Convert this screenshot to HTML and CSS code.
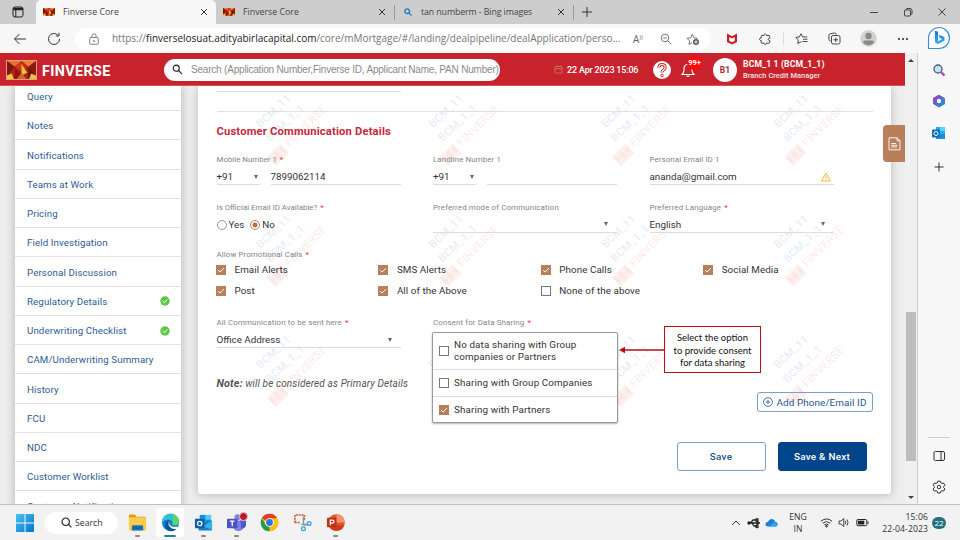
FILE: index.html
```
<!DOCTYPE html>
<html lang="en">
<head>
<meta charset="utf-8">
<title>Finverse Core</title>
<link rel="stylesheet" href="styles.css">
</head>
<body>
<svg class="defs" aria-hidden="true">
  <defs>
    <symbol id="logo" viewBox="0 0 30 20" preserveAspectRatio="none">
      <rect width="30" height="20" fill="#a8201a"/>
      <path d="M0 0h15L8 6z" fill="#e8742a"/><path d="M15 0h15l-8 6z" fill="#f0822b"/>
      <path d="M0 0l8 7-8 10z" fill="#7d1512"/><path d="M30 0l-8 7 8 10z" fill="#8b1a14"/>
      <path d="M8 6l7-6v12z" fill="#d8371f"/><path d="M22 6l-7-6v12z" fill="#c22a1d"/><path d="M15 3l6 10-6 3z" fill="#e6c334"/>
      <path d="M8 7L0 17l5-1 3 4z" fill="#b8231b"/><path d="M22 7l8 10-5-1-3 4z" fill="#6f1210"/>
      <path d="M8 7l7 9-4 4H8z" fill="#8c1714"/>
      <path d="M0 20v-4l5-2 2 6z" fill="#f0c63a"/><path d="M30 20v-4l-5-2-2 6z" fill="#eec13a"/>
      <path d="M10 20l5-7 5 7z" fill="#d9622a"/>
    </symbol>
    <symbol id="close" viewBox="0 0 8 8"><path d="M1 1l6 6M7 1l-6 6" stroke="#333" stroke-width="1"/></symbol>
    <symbol id="check" viewBox="0 0 10 10"><path d="M2.2 5.2l1.900 1.900 3.800-4" fill="none" stroke="#fff" stroke-width="1"/></symbol>
    <symbol id="mark" viewBox="0 0 80 90">
      <g font-family="Roboto, sans-serif" font-size="11">
        <text transform="translate(15 42) rotate(-43)" textLength="42" fill="#e5ecf6">BCM_11</text>
        <text transform="translate(24.500 56) rotate(-43)" textLength="48" fill="#e5ecf6">BCM_1_1</text>
        <text transform="translate(44 61) rotate(-45)" textLength="53" fill="#fcebea">FINVERSE</text>
      </g>
      <g transform="translate(32.500 69) rotate(-45)"><rect x="-9" y="-6.500" width="18" height="13" fill="#fdf1ee"/><path d="M-9-6.500l5 6-5 7zM9-6.500l-5 6 5 7zM-4 0l4-6 3 6-3 6z" fill="#fbe8e6"/></g>
    </symbol>
    <symbol id="ok" viewBox="0 0 10 10"><circle cx="5" cy="5" r="4.700" fill="#5fc648"/><path d="M2.700 5.100l1.600 1.600 3-3.200" fill="none" stroke="#fff"/></symbol>
  </defs>
</svg>

<div class="tabs">
  <div class="tab-actions"><svg width="12" height="12" viewBox="0 0 12 12" fill="none" stroke="#222"><rect x="1" y="1" width="10" height="10" rx="2"/><path d="M1 2.500h10M1.500 3.500h9" stroke-width="1.300"/><path d="M3.800 4v7" /></svg></div>
  <div class="tab active"><svg class="fav"><use href="#logo"/></svg><span>Finverse Core</span><svg class="x"><use href="#close"/></svg></div>
  <div class="tab second"><svg class="fav"><use href="#logo"/></svg><span>Finverse Core</span><svg class="x"><use href="#close"/></svg></div>
  <div class="tab third"><svg class="lens" viewBox="0 0 8 8" fill="none" stroke="#1c78c8" stroke-width="1.300"><circle cx="3.200" cy="3.200" r="2.300"/><path d="M5 5l2.500 2.500"/></svg><span class="bing">tan numberm - Bing images</span><svg class="x"><use href="#close"/></svg></div>
  <svg class="plus" viewBox="0 0 12 12" stroke="#333"><path d="M6 1v10M1 6h10"/></svg>
  <div class="window">
    <svg viewBox="0 0 10 10" fill="none" stroke="#333"><path d="M1 5.500h8" stroke-width=".9"/></svg>
    <svg viewBox="0 0 10 10" fill="none" stroke="#333" stroke-width=".9"><rect x="1.500" y="3" width="6" height="6" rx="1"/><path d="M3 2.500q.2-1 1-1h3q2 0 2 2v3q0 .8-1 1"/></svg>
    <svg viewBox="0 0 10 10" stroke="#333" stroke-width=".9"><path d="M1.500 1.500l7 7M8.500 1.500l-7 7"/></svg>
  </div>
</div>

<div class="toolbar">
  <svg class="nav back" viewBox="0 0 14 14" fill="none" stroke="#333"><path d="M13 7H1.500M6.500 2l-5 5 5 5"/></svg>
  <svg class="nav reload" viewBox="0 0 14 14" fill="none" stroke="#333"><path d="M12.500 7A5.500 5.500 0 1 1 10.800 3M12 .8V4H8.800"/></svg>
  <div class="address">
    <svg class="lock" viewBox="0 0 10 12" fill="none" stroke="#666" stroke-width=".8"><rect x=".7" y="4.500" width="8.600" height="6.800" rx="1.200"/><path d="M3 4.500V2.700a2 2 0 0 1 4 0v1.800"/><circle cx="5" cy="8" r=".5" fill="#666"/></svg>
    <span class="url">https://<b>finverselosuat.adityabirlacapital.com</b>/core/mMortgage/#/landing/dealpipeline/dealApplication/perso...</span>
    <span class="aloud">A<sup>))</sup></span>
    <svg class="zoom" viewBox="0 0 12 12" fill="none" stroke="#666" stroke-width=".9"><circle cx="5" cy="5" r="3.800"/><path d="M7.800 7.800l3.500 3.500M3.200 5h3.600"/></svg>
    <svg class="star" viewBox="0 0 14 14" fill="none" stroke="#666" stroke-width=".9"><path d="M6 10.800l-3 1.700.6-3.600L1 6.300l3.600-.5L6.300 2.300 8 5.800l3.600.5"/><circle cx="10" cy="10" r="3" fill="#555" stroke="none"/><path d="M10 8.300v3.400M8.300 10h3.400" stroke="#fff"/></svg>
  </div>
  <svg class="tool t1" viewBox="0 0 12 12"><path d="M1 .5l5 2.700L11 .5V9L6 11.500 1 9zM3.200 4v3.700L6 9.200l2.800-1.500V4L6 5.500z" fill="#c4202b" fill-rule="evenodd"/></svg>
  <svg class="tool t2" viewBox="0 0 12 12" fill="none" stroke="#333" stroke-width=".9"><path d="M3 2.500h2c-.3-2 2.700-2 2.400 0H10q.7 0 .7.700v2c-2-.4-2 2.500 0 2.200v2q0 .8-.8.800H7.500c.2 1.500-2.700 1.500-2.500 0H3q-.8 0-.8-.8V7.500C0 7.700 0 4.700 2.200 5V3.300q0-.8.800-.8z"/></svg>
  <i class="tsep"></i>
  <svg class="tool t3" viewBox="0 0 13 12" fill="none" stroke="#333" stroke-width=".9"><path d="M6.500 9L6 8.700 2.800 10.500l.5-3.600L.8 4.500l3.500-.6L6 .8l1.600 3.100h4.600M8 6.200h4.500M7.500 8.500h5"/></svg>
  <svg class="tool t4" viewBox="0 0 13 13" fill="none" stroke="#333" stroke-width=".9"><path d="M2.500 9Q1 8.800 1 7.500L.8 3.500Q.8 2 2.300 1.700L6.500 1Q8 .9 8.400 2.500"/><rect x="3.500" y="3.500" width="8.500" height="8.500" rx="1.600"/><path d="M7.800 5.500v4.500M5.500 7.800H10"/></svg>
  <svg class="avatar" viewBox="0 0 17 17"><circle cx="8.500" cy="8.500" r="8.300" fill="#d4d2cf"/><circle cx="8.500" cy="6" r="3.200" fill="#8b8986"/><path d="M3 12.200q0-1.800 2-1.800h7q2 0 2 1.800-2 3-5.500 3t-5.500-3z" fill="#8b8986"/></svg>
  <svg class="dots" viewBox="0 0 12 4" fill="#222"><circle cx="2" cy="2" r="1"/><circle cx="6" cy="2" r="1"/><circle cx="10" cy="2" r="1"/></svg>
</div>

<div class="middle">
  <div class="app">
    <header class="appbar">
      <svg class="brand"><use href="#logo"/></svg>
      <strong class="brandname">FINVERSE</strong>
      <div class="search"><svg viewBox="0 0 12 12" fill="none" stroke="#222" stroke-width="1.300"><circle cx="4.600" cy="4.600" r="3.300"/><path d="M7 7l4 4"/></svg><span>Search (Application Number,Finverse ID, Applicant Name, PAN Number)</span></div>
      <svg class="cal" viewBox="0 0 9 9" fill="none" stroke="#c87a52" stroke-width=".9"><rect x="1" y="1.500" width="7" height="6.500" rx=".6"/><path d="M1 3.700h7M3 .5v1.500M6 .5v1.500"/></svg>
      <span class="date">22 Apr 2023 15:06</span>
      <span class="help"><svg viewBox="0 0 18 18"><circle cx="9" cy="9" r="9" fill="#fff"/><path d="M5.800 6.700Q5.800 3.500 9 3.500t3.200 3Q12.200 8 10.500 9 9 9.800 9 11.500" fill="none" stroke="#c8232c" stroke-width="3"/><path d="M5.800 6.700Q5.800 3.500 9 3.500t3.200 3Q12.200 8 10.500 9 9 9.800 9 11.500" fill="none" stroke="#fff" stroke-width="1.200"/><circle cx="9" cy="14.500" r="1.300" fill="none" stroke="#c8232c" stroke-width=".9"/></svg></span>
      <span class="bell"><svg viewBox="0 0 14 17" fill="none" stroke="#fff" stroke-width="1.100"><path d="M1 13.500q2-2 2-4V7q.3-3.500 4-3.800Q10.700 3.500 11 7v2.500q0 2 2 4zM5.500 14.500q1.500 2 3 0M7 3V1.500"/></svg><em>99+</em></span>
      <span class="initials">B1</span>
      <div class="user"><b>BCM_1 1 (BCM_1_1)</b><small>Branch Credit Manager</small></div>
    </header>
    <div class="page">
      <nav class="menu">
        <a>Query</a><a>Notes</a><a>Notifications</a><a>Teams at Work</a><a>Pricing</a><a>Field Investigation</a><a>Personal Discussion</a>
        <a>Regulatory Details<svg><use href="#ok"/></svg></a><a>Underwriting Checklist<svg><use href="#ok"/></svg></a>
        <a>CAM/Underwriting Summary</a><a>History</a><a>FCU</a><a>NDC</a><a>Customer Worklist</a><a>Customer Notification</a>
      </nav>
      <main class="card">
        <svg class="marks" viewBox="0 0 692 408" width="692" height="408">
          <g id="markrow"><use href="#mark" x="47.500" y="0" width="80" height="90"/><use href="#mark" x="220" y="0" width="80" height="90"/><use href="#mark" x="392.500" y="0" width="80" height="90"/><use href="#mark" x="565" y="0" width="80" height="90"/></g>
          <use href="#markrow" y="120.500"/><use href="#markrow" y="241"/>
        </svg>
        <div class="prev"></div>
        <div class="rule"></div>
        <h2>Customer Communication Details</h2>
        <div class="fields">
          <div class="field"><label class="tight">Mobile Number 1 <i>*</i></label><div class="phone"><div class="value">+91<s></s></div><div class="value">7899062114</div></div></div>
          <div class="field"><label>Landline Number 1</label><div class="phone"><div class="value">+91<s></s></div><div class="value"></div></div></div>
          <div class="field"><label>Personal Email ID 1</label><div class="value mail">ananda@gmail.com<svg viewBox="0 0 10 10" fill="none" stroke="#f5b93a"><path d="M5 1L9.400 9H.6zM5 3.700v3M5 7.300v.8"/></svg></div></div>
        </div>
        <div class="fields second-row">
          <div class="field"><label class="tight">Is Official Email ID Available? <i>*</i></label><div class="radios"><span class="radio"></span>Yes<span class="radio on"></span>No</div></div>
          <div class="field"><label class="wide">Preferred mode of Communication</label><div class="value"><s></s></div></div>
          <div class="field"><label class="wide">Preferred Language <i>*</i></label><div class="value">English<s></s></div></div>
        </div>
        <label class="promo">Allow Promotional Calls <i>*</i></label>
        <div class="checks">
          <span><svg class="box on"><use href="#check"/></svg>Email Alerts</span><span><svg class="box on"><use href="#check"/></svg>SMS Alerts</span><span><svg class="box on"><use href="#check"/></svg>Phone Calls</span><span><svg class="box on"><use href="#check"/></svg>Social Media</span>
          <span><svg class="box on"><use href="#check"/></svg>Post</span><span><svg class="box on"><use href="#check"/></svg>All of the Above</span><span><svg class="box"></svg>None of the above</span>
        </div>
        <div class="fields consent-row">
          <div class="field"><label class="wide">All Communication to be sent here <i>*</i></label><div class="value">Office Address<s></s></div><p class="note"><b>Note:</b> will be considered as Primary Details</p></div>
          <div class="field"><label class="wide">Consent for Data Sharing <i>*</i></label>
            <div class="panel">
              <div class="opt tall"><svg class="box"></svg><span>No data sharing with Group<br>companies or Partners</span></div>
              <div class="opt"><svg class="box"></svg><span>Sharing with Group Companies</span></div>
              <div class="opt"><svg class="box on"><use href="#check"/></svg><span>Sharing with Partners</span></div>
            </div>
          </div>
          <div class="add-wrap"><button class="add"><svg viewBox="0 0 10 10" fill="none" stroke="#1d5496" stroke-width=".8"><circle cx="5" cy="5" r="4.400"/><path d="M5 2.800v4.400M2.800 5h4.400"/></svg>Add Phone/Email ID</button></div>
        </div>
        <div class="actions"><button class="save">Save</button><button class="save next">Save &amp; Next</button></div>
        <svg class="arrow" viewBox="0 0 48 8"><path d="M5 4h43" stroke="#b90d12" stroke-width="1.400"/><path d="M0 4l6-3.200v6.400z" fill="#b90d12"/></svg>
        <div class="callout">Select the option<br>to provide consent<br>for data sharing</div>
      </main>
      <div class="docs"><svg viewBox="0 0 13 14" fill="none" stroke="#fff" stroke-width=".9"><path d="M1 .8h8l3 3v9H1zM9 .8v3h3M3.200 6.500h5M3.200 8.300h6M3.200 10h6"/></svg></div>
    </div>
  </div>
  <div class="scroll"><b class="up"></b><span class="thumb"></span><b class="down"></b></div>
  <aside class="rail">
    <svg class="bingchat" viewBox="0 0 24 24"><defs><linearGradient id="bg" x1="0" y1="0" x2="0" y2="1"><stop offset="0" stop-color="#1b6fd8"/><stop offset="1" stop-color="#36b6f0"/></linearGradient></defs><path d="M1.500 22.500V11.500A10.500 10.500 0 1 1 12 22.500z" fill="#fff" stroke="#2f8be6" stroke-width="1.100"/><path d="M8 4.800l3 1v9.500l4-2.200-2.200-1.100-1.300-3.200 6 2.100v3.600l-6.600 3.800L8 16.300z" fill="url(#bg)"/></svg>
    <svg class="r r1" viewBox="0 0 14 14" fill="none"><circle cx="6" cy="6" r="4" fill="#bfe4f5" stroke="#555c66" stroke-width="1.300"/><path d="M9 9l3.500 3.500" stroke="#a33be0" stroke-width="2.200"/></svg>
    <svg class="r r2" viewBox="0 0 14 14"><path d="M7 .7L12.800 4v6L7 13.300 1.200 10V4z" fill="#5a63c8"/><path d="M7 .7L1.200 4v6L4 8V5.500l4-2.300z" fill="#8a4dc4"/><path d="M12.800 5v5L7 13.300 3 11l3-1 4-2V4z" fill="#2c87cf"/><circle cx="7" cy="7" r="2.200" fill="#f7f7f7"/></svg>
    <svg class="r r3" viewBox="0 0 14 14"><path d="M4 1h9v11H4z" fill="#28a8ea"/><path d="M8 1h5v4H8z" fill="#50d9ff"/><path d="M4 8h9v5H4z" fill="#1490df"/><rect y="3.500" width="8" height="8" rx="1" fill="#0f6cbd"/><circle cx="4" cy="7.500" r="2" fill="none" stroke="#fff"/></svg>
    <svg class="r r4" viewBox="0 0 12 12" stroke="#333"><path d="M6 1.500v9M1.500 6h9"/></svg>
    <i class="rline"></i>
    <svg class="r r5" viewBox="0 0 12 12" fill="none" stroke="#333"><rect x="1" y="1.500" width="10.500" height="9" rx="1.500"/><path d="M8 1.500v9"/></svg>
    <svg class="r r6" viewBox="0 0 14 14" fill="none" stroke="#333" stroke-width="1"><path d="M5.700 1.200h2.600l.5 1.700 1.100.6 1.700-.4 1.300 2.200L11.700 6.500v1.200l1.200 1.200-1.300 2.200-1.700-.4-1.100.6-.5 1.700H5.700l-.5-1.700-1.100-.6-1.700.4L1.100 8.900l1.200-1.200V6.500L1.100 5.300l1.300-2.200 1.700.4 1.100-.6z"/><circle cx="7" cy="7.100" r="1.700"/></svg>
  </aside>
</div>

<footer class="taskbar">
  <svg class="start" viewBox="0 0 18 18"><defs><linearGradient id="wg" x1="0" y1="0" x2="1" y2="1"><stop offset="0" stop-color="#46c4f5"/><stop offset="1" stop-color="#0674cf"/></linearGradient></defs><path d="M0 0h8.500v8.500H0zM9.500 0H18v8.500H9.500zM0 9.500h8.500V18H0zM9.500 9.500H18V18H9.500z" fill="url(#wg)"/></svg>
  <div class="tsearch"><svg viewBox="0 0 11 11" fill="none" stroke="#222" stroke-width="1.200"><circle cx="4.700" cy="4.700" r="3.700"/><path d="M7.400 7.400l3 3"/></svg>Search</div>
  <div class="apps">
    <span class="run"><svg viewBox="0 0 20 20"><path d="M1 3q0-1.500 1.500-1.500H7L9 4h9.500v4H1z" fill="#dc9a12"/><rect x="1" y="4.500" width="18" height="14" rx="1.200" fill="#fdcb48"/><path d="M4 18.500V14.500Q4 13 5.500 13h9q1.500 0 1.500 1.500v4z" fill="#1474c4"/><path d="M7 15.800h6" stroke="#0a4c88"/></svg></span>
    <span class="sel"><svg viewBox="0 0 20 20"><circle cx="10" cy="10" r="9" fill="#1180cf"/><path d="M1 10A9 9 0 0 1 19 9q.2 4-4 4-3.500 0-3-2 1-3-3-4Q4 6 1 10z" fill="#2fc1d8"/><path d="M11 1.100Q18.500 2 19 9q.2 4-4 4-3.500 0-3-2 .6-1.500 0-2.500 3-3-1-7.400z" fill="#5bd566"/><path d="M9 7q-4 5 1 9 3 2 7 .2Q13 20 8 18.800 3 16 4.500 11 6 7.500 9 7z" fill="#0c4f9a"/><path d="M9.300 8q-2 2 0 4.500 2.500 3 7 1.800L18 15.500l-1 1q-4 1-6.500-1Q6 12 9.300 8z" fill="#fafafa"/></svg></span>
    <span class="run"><svg viewBox="0 0 20 20"><path d="M6 2h12v8H6z" fill="#1490df"/><path d="M12 2h6v5h-6z" fill="#50d0fa"/><path d="M4 11l15-3v9.500q0 1-1 1H5z" fill="#1580cc"/><path d="M19 8l-9 6 9 4z" fill="#35b4ee"/><rect x="1" y="6" width="10" height="10" rx="1" fill="#0f5ead"/><circle cx="6" cy="11" r="2.300" fill="none" stroke="#fff" stroke-width="1.300"/></svg></span>
    <span class="run"><svg viewBox="0 0 20 20"><circle cx="11" cy="4.500" r="3.200" fill="#7b83eb"/><path d="M6 8h12v6q-1 5-6 5t-6-5z" fill="#7b83eb"/><path d="M14 8h6v5q-1 4-5 3z" fill="#5059c9"/><rect x="0" y="6" width="11" height="10" rx="1" fill="#4b53bc"/><path d="M3 8.500h5M5.500 8.500v5.500" stroke="#fff" stroke-width="1.300"/></svg><u></u></span>
    <span><svg viewBox="0 0 20 20"><circle cx="10" cy="10" r="9.200" fill="#fbc116"/><path d="M10 10L2 5.400A9.200 9.200 0 0 1 18 5.400z" fill="#e33b2e"/><path d="M10 5.400h8A9.200 9.200 0 0 1 10 19.200L14 12z" fill="#fbc116"/><path d="M2 5.400L6 12.300 10 14.500 10 19.200A9.200 9.200 0 0 1 2 5.400z" fill="#269b48"/><circle cx="10" cy="10" r="4.600" fill="#fff"/><circle cx="10" cy="10" r="3.600" fill="#2c74e6"/></svg></span>
    <span><svg viewBox="0 0 20 20" fill="none"><path d="M2 10V2h10v6M2 10h6" stroke="#d5492c" stroke-width="1.600" stroke-dasharray="2 1"/><path d="M11 4v8l3 1M9 12h7" stroke="#8c9298" stroke-width="1.600"/><circle cx="11" cy="16.500" r="2" stroke="#2d9fe0" stroke-width="1.300"/><circle cx="17" cy="11" r="2" stroke="#2d9fe0" stroke-width="1.300"/></svg></span>
    <span class="run"><svg viewBox="0 0 20 20"><circle cx="11" cy="10" r="8.800" fill="#e2532f"/><path d="M11 1.200A8.800 8.800 0 0 1 19.800 10H11z" fill="#ff9068"/><path d="M3 13h16.200Q17 18.800 11 18.800T3 13z" fill="#cf3d18"/><rect x="1" y="5" width="10" height="10" rx="1" fill="#b83415"/><path d="M4.500 13V7.500h2q2 0 2 1.600t-2 1.600h-2" stroke="#fff" stroke-width="1.200" fill="none"/></svg></span>
  </div>
  <div class="tray">
    <svg class="chev" viewBox="0 0 10 10" fill="none" stroke="#333"><path d="M1 7l4-4 4 4"/></svg>
    <svg class="usb" viewBox="0 0 13 12" fill="none" stroke="#222" stroke-width="1.300"><path d="M1 6h10M3.500 6l2.500-3h3M5 6l2 3h3"/><circle cx="2" cy="6" r="1" fill="#222"/><rect x="9" y="2" width="2" height="2"/><circle cx="10" cy="9.500" r="1.200"/><path d="M10 4.500L12.500 6 10 7.500z" fill="#222"/></svg>
    <svg class="cloud" viewBox="0 0 13 9"><path d="M3 8.500Q.3 8.300.5 6 .8 4 3 3.800 4.200.7 7 1q2.300.3 3 2.700 2.600.2 2.700 2.500 0 2.300-2.500 2.300z" fill="#1a7fd6"/><path d="M3.500 8.500L9 4l3.700 2.500q-.2 2-2.500 2z" fill="#28a8f0"/></svg>
    <span class="lang">ENG<br>IN</span>
    <svg class="wifi" viewBox="0 0 13 11" fill="none" stroke="#333" stroke-width="1"><path d="M1 4.200q5.500-4.500 11 0M2.700 6.100q3.800-3 7.600 0M4.400 7.900q2.100-1.600 4.200 0"/><circle cx="6.500" cy="9.200" r=".8" fill="#333"/></svg>
    <svg class="vol" viewBox="0 0 12 11" fill="none" stroke="#333" stroke-width=".9"><path d="M1 4h2l2.800-2.500v8L3 7H1zM7.300 3.800q1 1.700 0 3.400M9 2.500q2 3 0 6"/></svg>
    <svg class="bat" viewBox="0 0 13 9"><rect x=".8" y="1.500" width="10" height="6.200" rx="1.300" fill="none" stroke="#222"/><rect x="2" y="2.700" width="6.300" height="3.800" fill="#222"/><path d="M12 3.500v2.200" stroke="#222"/></svg>
    <span class="clock">15:06<br>22-04-2023</span>
    <span class="count">22</span>
  </div>
</footer>
</body>
</html>
```
FILE: styles.css
```
* { box-sizing: border-box; }
body { margin: 0; width: 960px; height: 540px; overflow: hidden; display: flex; flex-direction: column; font-family: Roboto, sans-serif; background: #f7f7f7; color: #333; }
svg { flex: none; display: block; }
.defs { width: 0; height: 0; position: absolute; }
i, em { font-style: normal; }

.tabs { flex: none; height: 24px; background: #cdcdcd; display: flex; align-items: center; font: 8.8px "Open Sans", sans-serif; color: #444; }
.tab-actions { width: 36px; padding-left: 12px; }
.tab { height: 24px; display: flex; align-items: center; padding-left: 7px; }
.tab span { margin-top: -1px; }
.tab.active { width: 180px; background: #f7f7f7; border-radius: 5px 5px 0 0; }
.tab.second { width: 179px; border-right: 1px solid #999; height: 15px; }
.tab.third { width: 179px; height: 15px; border-right: 1px solid #999; padding-left: 9px; }
.fav { width: 12px; height: 8px; margin-right: 8px; }
.lens { width: 8px; height: 8px; margin-right: 9px; }
.x { width: 8px; height: 8px; margin-left: auto; margin-right: 8px; }
.plus { width: 12px; height: 12px; margin-left: 7px; }
.window { margin-left: auto; display: flex; gap: 24px; padding-right: 13px; }
.window svg { width: 10px; height: 10px; }
.bing { letter-spacing: -.1px; }

.toolbar { flex: none; height: 29px; background: #f7f7f7; display: flex; align-items: center; }
.nav { width: 14px; height: 14px; }
.back { margin-left: 13px; }
.reload { margin-left: 20px; }
.address { margin-left: 14px; width: 636px; height: 22px; border-radius: 11px; background: #fff; display: flex; align-items: center; }
.lock { width: 10px; height: 12px; margin-left: 14px; }
.url { margin-left: 13px; width: 509px; white-space: nowrap; font: 10px "Open Sans", sans-serif; color: #757575; letter-spacing: -.01px; margin-top: -1px; }
.url b { font-weight: 400; color: #222; }
.aloud { margin-left: 12px; width: 14px; font: 10px "Open Sans", sans-serif; color: #666; white-space: nowrap; }
.aloud sup { font-size: 6px; }
.zoom { width: 12px; height: 12px; margin-left: 13px; }
.star { width: 14px; height: 14px; margin-left: 14px; }
.tool { width: 12px; height: 12px; }
.t1 { margin-left: 15px; }
.t2 { margin-left: 21px; }
.tsep { width: 1px; height: 13px; background: #ddd; margin: 0 11px 0 12px; }
.t3 { width: 13px; }
.t4 { width: 13px; height: 13px; margin-left: 20px; }
.avatar { width: 17px; height: 17px; margin-left: 19px; }
.dots { width: 12px; height: 4px; margin-left: 20px; }

.middle { flex: none; height: 451px; display: flex; }
.app { width: 905px; display: flex; flex-direction: column; background: #ededed; }
.appbar { flex: none; height: 33px; background: #c8232c; display: flex; align-items: center; color: #fff; border-bottom: 1px solid #d9545a; padding-top: 1px; }
.brand { width: 31px; height: 20px; margin-left: 6px; border: 1px solid #e29a8e; }
.brandname { margin-left: 5px; width: 69px; font-size: 14.3px; font-weight: 700; letter-spacing: .4px; margin-top: 3px; }
.search { margin-left: 53px; width: 336px; height: 22px; border-radius: 11px; background: #fff; display: flex; align-items: center; padding-left: 8px; }
.search svg { width: 11px; height: 11px; margin-right: 8px; }
.search span { font: 10px "Liberation Sans", sans-serif; color: #8a8a8a; white-space: nowrap; letter-spacing: -.2px; }
.cal { width: 9px; height: 9px; margin-left: 54px; }
.date { margin-left: 4px; width: 72px; font-size: 9px; font-weight: 500; white-space: nowrap; letter-spacing: -.18px; margin-top: 1px; }
.help { margin-left: 14px; }
.help svg { width: 18px; height: 18px; }
.bell { position: relative; margin-left: 10px; }
.bell svg { width: 14px; height: 17px; }
.bell em { position: absolute; left: 6px; top: -5px; width: 15px; height: 14px; line-height: 14px; border-radius: 7px; background: #ff0a0a; font-size: 7.5px; font-weight: 700; text-align: center; }
.initials { margin-left: 18px; width: 24px; height: 24px; line-height: 24px; border-radius: 50%; background: #fff; color: #b3262d; text-align: center; font-size: 8.5px; font-weight: 700; }
.user { margin-left: 6px; margin-top: 1px; display: flex; flex-direction: column; white-space: nowrap; }
.user b { font-size: 8.7px; line-height: 11px; font-weight: 700; letter-spacing: .12px; }
.user small { font-size: 7.4px; line-height: 11px; font-weight: 500; color: #fbe3e4; letter-spacing: .05px; }

.page { flex: 1; min-height: 0; display: flex; align-items: flex-start; overflow: hidden; position: relative; }
.menu { flex: none; margin-left: 15px; width: 166px; background: #fff; box-shadow: 0 0 9px rgba(0,0,0,.25); }
.menu a { display: flex; align-items: center; height: 29.25px; padding: 1.5px 11.5px 0 12px; border-bottom: 1px solid #e2e2e2; font-size: 9.7px; letter-spacing: .12px; color: #2d5b94; white-space: nowrap; }
.menu a:first-child { height: 25px; padding-top: 1px; padding-bottom: 4px; }
.menu a svg { width: 10px; height: 10px; margin-left: auto; }
.card { position: relative; z-index: 0; flex: none; margin-left: 17px; width: 692.5px; height: 408px; background: #fff; border-radius: 0 0 3px 3px; box-shadow: 0 1px 9px rgba(0,0,0,.22); padding: 0 18px 0 18.5px; }
.marks { position: absolute; left: 0; top: 0; z-index: -1; }
.prev { width: 184px; height: 6px; border-bottom: 1px solid #dedede; }
.rule { width: 656px; height: 20px; border-bottom: 1px solid #e0e0e0; }
h2 { margin: 0; height: 39px; line-height: 39px; font-size: 11.2px; font-weight: 700; color: #c8283a; letter-spacing: .18px; }
.fields { display: grid; grid-template-columns: 184px 184px 184px; column-gap: 32.5px; }
.field { min-width: 0; }
label { display: block; height: 18px; line-height: 18px; font-size: 7.9px; color: #858585; white-space: nowrap; letter-spacing: .1px; }
label.tight { letter-spacing: 0; }
label.wide { letter-spacing: .14px; }
label i { color: #e33; margin-left: 1px; }
.value { height: 16px; line-height: 15px; border-bottom: 1px solid #dcdcdc; display: flex; align-items: center; font-size: 9.8px; color: #333; white-space: nowrap; }
.value s { margin-left: auto; margin-right: 9px; border: 2.5px solid transparent; border-top: 4px solid #666; border-bottom: 0; }
.phone { display: grid; grid-template-columns: 43px 130px; column-gap: 11px; }
.phone s { margin-right: 2px; }
.mail svg { margin-left: auto; width: 10px; height: 10px; margin-right: 3px; }
.second-row { margin-top: 13.5px; }
.radios { display: flex; align-items: center; height: 16px; font-size: 9.8px; }
.radio { width: 10px; height: 10px; border: 1px solid #999; border-radius: 50%; margin-right: 2px; }
.radio.on { margin-left: 6px; border-color: #b97f5a; background: radial-gradient(#b4724a 0 2.2px, #fff 2.8px); }
.promo { margin-top: 13.5px; height: 13px; }
.checks { display: grid; grid-template-columns: repeat(4, 162.4px); grid-auto-rows: 21px; font-size: 9.8px; letter-spacing: .08px; margin-left: -.5px; }
.checks span { display: flex; align-items: center; gap: 8.5px; white-space: nowrap; }
.box { width: 10px; height: 10px; border: 1px solid #777; background: #fff; }
.box.on { border: 0; background: #b97f5a; }
.consent-row { margin-top: 13.3px; grid-template-columns: 184px 184px 223px; }
.note { margin: 27px 0 0; font-style: italic; font-size: 10px; line-height: 18px; color: #555; white-space: nowrap; letter-spacing: .12px; }
.note b { font-size: 10.8px; }
.panel { width: 186px; height: 91px; margin-left: -1px; background: #fff; border: 1px solid #999; border-radius: 2px; box-shadow: 0 1px 2px rgba(0,0,0,.3); }
.opt { height: 27px; display: flex; align-items: center; gap: 5px; padding-left: 6px; font-size: 9.8px; letter-spacing: .14px; line-height: 12px; border-bottom: 1px solid #ddd; white-space: nowrap; }
.opt.tall { height: 37px; padding-bottom: 1px; }
.opt:last-child { border: 0; height: 25px; }
.add-wrap { display: flex; align-items: flex-end; justify-content: flex-end; padding-bottom: 11px; }
button { font-family: inherit; }
.add { width: 116px; height: 20px; border: 1px solid #7ba0cc; border-radius: 3px; background: transparent; color: #1d5496; padding: 0; display: flex; align-items: center; justify-content: center; gap: 4px; font-size: 9.9px; letter-spacing: .1px; white-space: nowrap; }
.add svg { width: 10px; height: 10px; }
.actions { display: flex; gap: 12px; margin: 19px 6px 0 0; justify-content: flex-end; }
.save { width: 89px; height: 29px; border: 1px solid #7ba0cc; border-radius: 3px; background: #fff; color: #1d5496; font-size: 9.9px; font-weight: 500; letter-spacing: .25px; padding: 0; }
.next { background: #00458a; border-color: #00458a; color: #fff; }
.arrow { position: absolute; left: 421px; top: 260px; width: 48px; height: 8px; }
.callout { position: absolute; left: 466px; top: 240px; width: 97px; height: 47px; border: 1.5px solid #c00d12; background: #fff; color: #111; text-align: center; font: 9.5px/12.6px Lato, sans-serif; padding-top: 5px; white-space: nowrap; }
.docs { position: absolute; right: 0; top: 39px; width: 22px; height: 37px; background: #b97f5a; border-radius: 4px 0 0 4px; z-index: 1; display: flex; align-items: center; justify-content: center; }
.docs svg { width: 13px; height: 14px; }

.scroll { width: 13px; background: #f0f0f0; border-right: 1px solid #ccc; display: flex; flex-direction: column; align-items: center; }
.scroll b { border: 3px solid transparent; }
.up { border-bottom: 3px solid #444 !important; border-top: 0 !important; margin-top: 6px; }
.thumb { width: 10px; height: 149px; margin-top: 250px; background: #bdbdbd; }
.down { border-top: 3px solid #444 !important; border-bottom: 0 !important; margin-top: 35px; }
.rail { flex: 1; display: flex; flex-direction: column; align-items: center; background: #f7f7f7; }
.bingchat { width: 24px; height: 24px; margin-top: -27px; }
.r { width: 14px; height: 14px; }
.r1 { margin-top: 13px; }
.r2 { margin-top: 17px; }
.r3 { margin-top: 18px; }
.r4 { width: 12px; height: 12px; margin-top: 21px; }
.rline { width: 22px; height: 1px; background: #ccc; margin-top: 264px; }
.r5 { width: 12px; height: 12px; margin-top: 12px; }
.r6 { margin-top: 18px; }

.taskbar { flex: none; height: 36px; background: #f2f2f2; border-top: 1px solid #bfbfbf; display: flex; align-items: center; font-family: "Open Sans", sans-serif; }
.start { width: 18px; height: 18px; margin-left: 16px; }
.tsearch { margin-left: 11px; width: 73px; height: 22px; border-radius: 11px; background: #fff; display: flex; align-items: center; padding-left: 16px; gap: 3px; font-size: 8.7px; }
.tsearch svg { width: 11px; height: 11px; }
.apps { display: flex; margin-left: 5px; }
.apps span { width: 28px; height: 29px; margin-right: 5px; display: flex; justify-content: center; align-items: center; border-radius: 3px; position: relative; }
.apps svg { width: 19px; height: 19px; }
.apps .sel { background: #fff; }
.apps u { position: absolute; right: 2px; top: 4px; width: 9px; height: 9px; border: 1px solid #ccc; border-radius: 50%; background: #c50f2f; }
.apps .run::after, .apps .sel::after { content: ""; position: absolute; bottom: 0; width: 5px; height: 2px; border-radius: 1px; background: #888; }
.apps .sel::after { width: 12px; background: #2a8292; }
.tray { margin-left: auto; display: flex; align-items: center; font-size: 8.6px; line-height: 12px; padding-right: 14px; }
.chev { width: 10px; height: 10px; }
.usb { width: 13px; height: 12px; margin-left: 6px; }
.cloud { width: 13px; height: 9px; margin-left: 5px; }
.lang { width: 30px; text-align: center; margin-left: 5px; }
.wifi { width: 13px; height: 11px; margin-left: 7px; }
.vol { width: 12px; height: 11px; margin-left: 5px; }
.bat { width: 13px; height: 9px; margin-left: 6px; }
.clock { width: 57px; margin-left: 2px; text-align: right; white-space: nowrap; letter-spacing: .1px; }
.count { width: 14px; height: 12px; margin-left: 4px; border-radius: 6px; background: #23707f; color: #fff; font-size: 8px; text-align: center; }
```
